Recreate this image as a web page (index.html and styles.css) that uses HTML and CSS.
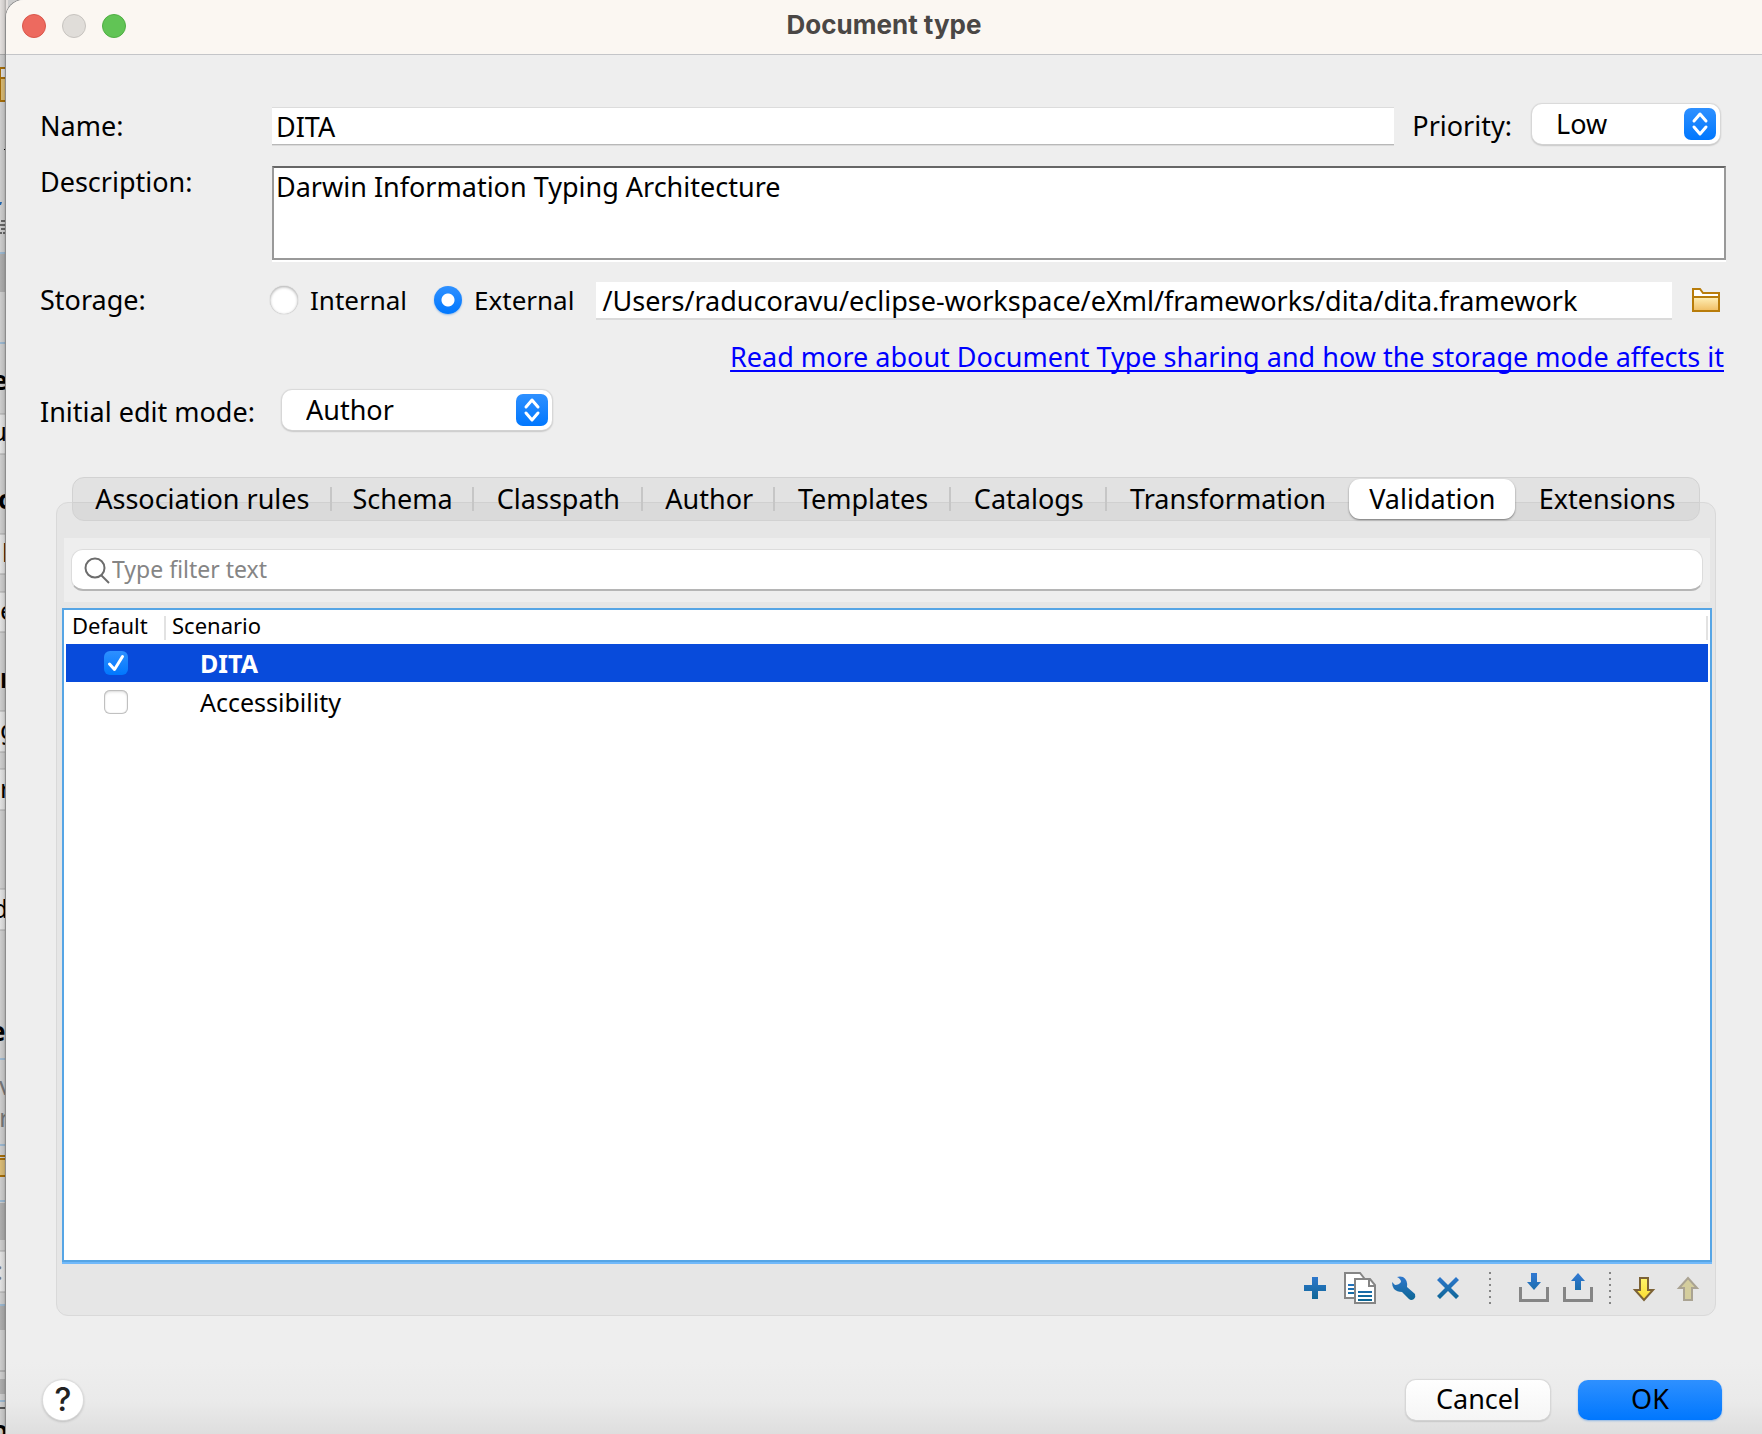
FILE: index.html
```html
<!DOCTYPE html>
<html lang="en">
<head>
<meta charset="utf-8">
<title>Document type</title>
<link rel="stylesheet" href="styles.css">
</head>
<body>
<div class="desktop">
  <svg class="behind" width="8" height="1434" aria-hidden="true">
    <defs>
      <linearGradient id="shade"><stop offset="0" stop-color="#000" stop-opacity="0"/><stop offset="0.6" stop-color="#000" stop-opacity=".08"/><stop offset="1" stop-color="#000" stop-opacity=".24"/></linearGradient>
    </defs>
    <rect width="8" height="1434" fill="#cdcdcd"/>
    <rect width="8" height="54" fill="#e4e0de"/>
    <rect y="54" width="8" height="1" fill="#aaa"/>
    <rect y="67" width="8" height="35" fill="#a46c08"/><rect x="1" y="69" width="8" height="8" fill="#ddd"/><rect x="1" y="79" width="8" height="21" fill="#d9bb76"/>
    <path d="M4 149h4v1h-1v2h-1v-2h-2z" fill="#000"/>
    <path d="M0 202h2l-1 3h-1z" fill="#1f66b0"/>
    <path d="M1 221h7M0 225h8M1 229h7M0 233h2M3 233h5" stroke="#666" stroke-width="2"/>
    <g fill="#9cb8d0"><rect y="252" width="8" height="2"/><rect y="342" width="8" height="2"/><rect y="1058" width="8" height="2"/><rect y="1144" width="8" height="2"/><rect y="1200" width="8" height="2"/><rect y="1304" width="8" height="2"/><rect y="1400" width="8" height="2"/></g>
    <g fill="#adadad"><rect y="254" width="8" height="38"/><rect y="1203" width="8" height="37"/><rect y="1306" width="8" height="24"/><rect y="1379" width="8" height="15"/></g>
    <g fill="#e2e2e2" stroke="#a8a8a8"><rect x="-2" y="414" width="12" height="40"/><rect x="-2" y="534" width="12" height="40"/><rect x="-2" y="592" width="12" height="40"/><rect x="-2" y="711" width="12" height="41"/><rect x="-2" y="769" width="12" height="41"/><rect x="-2" y="889" width="12" height="41"/><rect x="-2" y="1251" width="12" height="41"/></g>
    <path d="M0 1371h8" stroke="#b0b0b0" stroke-width="2"/><path d="M0 1408h8" stroke="#555" stroke-width="2"/>
    <path d="M0 1156H8M0 1159H8M0 1176H8" stroke="#a46c08" stroke-width="2"/><rect y="1160" width="8" height="15" fill="#d9bb76"/>
    <g class="behind-text">
      <text class="strong" x="-8" y="390">e</text><text x="-9" y="441">u</text><text class="strong" x="-2" y="509">c</text><text x="2" y="562">l</text><text x="0" y="620">e</text><text class="strong" x="0" y="688">r</text><text x="0" y="739">g</text><text x="0" y="798">r</text><text x="-8" y="918">d</text><text class="strong" x="-10" y="1041">es</text><text class="dim" x="-1" y="1095">v</text><text class="dim" x="-1" y="1127">r</text><text class="dim" x="-4" y="1280">:</text><text class="strong" x="-8" y="1440">o</text>
    </g>
    <rect width="6" height="1434" fill="url(#shade)"/>
  </svg>

  <main class="window">
    <header class="titlebar">
      <div class="lights"><button class="light close" aria-label="Close"></button><button class="light minimize" aria-label="Minimize" disabled></button><button class="light zoom" aria-label="Zoom"></button></div>
      <h1>Document type</h1>
    </header>

    <form class="form">
      <div class="row name-row">
        <label class="caption" for="name">Name:</label>
        <input class="field name" id="name" type="text" value="DITA">
        <label class="priority-label" for="priority">Priority:</label>
        <span class="combo priority">
          <select id="priority"><option>Low</option></select>
          <svg width="32" height="32" viewBox="0 0 32 32"><path d="M10 13l6-7 6 7M10 19l6 7 6-7"/></svg>
        </span>
      </div>
      <div class="row description-row">
        <label class="caption" for="description">Description:</label>
        <textarea id="description">Darwin Information Typing Architecture</textarea>
      </div>
      <div class="row storage-row">
        <span class="caption">Storage:</span>
        <label class="choice"><input type="radio" name="storage">Internal</label>
        <label class="choice"><input type="radio" name="storage" checked>External</label>
        <input class="field path" type="text" aria-label="External storage path" value="/Users/raducoravu/eclipse-workspace/eXml/frameworks/dita/dita.framework">
        <button class="browse" type="button" aria-label="Browse">
          <svg width="28" height="24" viewBox="0 0 28 24"><defs><linearGradient id="gold" x2="0" y2="1"><stop stop-color="#fff0b8"/><stop offset="1" stop-color="#f0bd62"/></linearGradient></defs><path d="M1 23V1h7l3 4h16v18z" fill="#fff" stroke="#b87c0a" stroke-width="2"/><path d="M1 9h26v14H1z" fill="url(#gold)" stroke="#b87c0a" stroke-width="2"/></svg>
        </button>
      </div>
      <div class="link-row"><a href="#storage">Read more about Document Type sharing and how the storage mode affects it</a></div>
      <div class="row mode-row">
        <label class="caption" for="mode">Initial edit mode:</label>
        <span class="combo mode">
          <select id="mode"><option>Author</option></select>
          <svg width="32" height="32" viewBox="0 0 32 32"><path d="M10 13l6-7 6 7M10 19l6 7 6-7"/></svg>
        </span>
      </div>
    </form>

    <section class="tabbed">
      <nav class="tabs" role="tablist">
        <button role="tab">Association rules</button><button role="tab">Schema</button><button role="tab">Classpath</button><button role="tab">Author</button><button role="tab">Templates</button><button role="tab">Catalogs</button><button role="tab">Transformation</button><button role="tab" aria-selected="true">Validation</button><button role="tab">Extensions</button>
      </nav>
      <div class="panel">
        <div class="filter">
          <label class="search">
            <svg width="26" height="28" viewBox="0 0 26 28"><circle cx="11" cy="12" r="9.500"/><path d="M17 19l8 8"/></svg>
            <input type="text" placeholder="Type filter text" aria-label="Type filter text">
          </label>
        </div>
        <div class="list">
          <table>
            <thead><tr><th class="default">Default</th><th class="scenario">Scenario</th></tr></thead>
            <tbody>
              <tr class="selected"><td><label class="check"><input type="checkbox" checked aria-label="DITA default"><svg width="24" height="24" viewBox="0 0 24 24"><path d="M5.500 13l5 5.500 8-13"/></svg></label></td><td>DITA</td></tr>
              <tr><td><label class="check"><input type="checkbox" aria-label="Accessibility default"></label></td><td>Accessibility</td></tr>
            </tbody>
          </table>
        </div>
        <div class="toolbar">
          <svg class="defs" width="0" height="0"><defs><linearGradient id="blue" gradientUnits="userSpaceOnUse" x1="0" y1="4" x2="0" y2="28"><stop stop-color="#2f78cf"/><stop offset="1" stop-color="#0d6694"/></linearGradient><linearGradient id="yellow" x2="0" y2="1"><stop stop-color="#fff56a"/><stop offset="1" stop-color="#fbdc30"/></linearGradient></defs></svg>
          <button aria-label="New"><svg viewBox="0 0 32 32"><path d="M12 5h6v8h8v6h-8v8h-6v-8H4v-6h8z" fill="url(#blue)"/></svg></button>
          <button aria-label="Duplicate"><svg viewBox="0 0 32 32"><path d="M1 1h15l4 5v20H1z" fill="#fff" stroke="#858585" stroke-width="2"/><path d="M4 12h8v2H4zM4 16h8v2H4zM4 20h8v2H4z" fill="url(#blue)"/><path d="M11 7h15l5 6v18H11z" fill="#fff" stroke="#858585" stroke-width="2"/><path d="M25 7v7h6" fill="none" stroke="#858585" stroke-width="2"/><path d="M14 19h14v2H14zM14 23h14v2H14zM14 27h14v2H14z" fill="url(#blue)"/></svg></button>
          <button aria-label="Edit"><svg viewBox="0 0 32 32"><path d="M9 5Q12 4 15 5Q20 8 19 15L27 22Q28 25 26 27Q23 29 21 27L14 20Q9 20 6 17Q4 14 4 10L7 13Q11 13 13 10Q13 7 9 5z" fill="url(#blue)"/></svg></button>
          <button aria-label="Delete"><svg viewBox="0 0 32 32"><path d="M5 8l3-3 8 8 8-8 3 3-8 8 8 8-3 3-8-8-8 8-3-3 8-8z" fill="url(#blue)"/></svg></button>
          <span class="dots"></span>
          <button aria-label="Import"><svg viewBox="0 0 32 32"><path d="M1.500 15v13.500h27V15" fill="none" stroke="#858585" stroke-width="3"/><path d="M12 1h6v9h4l-7 8-7-8h4z" fill="url(#blue)"/></svg></button>
          <button aria-label="Export"><svg viewBox="0 0 32 32"><path d="M1.500 15v13.500h27V15" fill="none" stroke="#858585" stroke-width="3"/><path d="M12 18h6V9h4l-7-8-7 8h4z" fill="url(#blue)"/></svg></button>
          <span class="dots"></span>
          <button aria-label="Move down"><svg viewBox="0 0 32 32"><path d="M12 6h8v12h5l-9 10-9-10h5z" fill="url(#yellow)" stroke="#7c6236" stroke-width="2"/></svg></button>
          <button aria-label="Move up" disabled><svg viewBox="0 0 32 32"><path d="M12 28h8V16h5L16 6 7 16h5z" fill="#d4cd9d" stroke="#aaa392" stroke-width="2"/></svg></button>
        </div>
      </div>
    </section>

    <footer class="actions">
      <button class="help" aria-label="Help">?</button>
      <button class="push">Cancel</button>
      <button class="push primary">OK</button>
    </footer>
  </main>
</div>
</body>
</html>
```
FILE: styles.css
```css
* { box-sizing: border-box; }

body {
  margin: 0;
  background: #cdcdcd;
  color: #000;
  font: 27px/32px "Noto Sans", "Open Sans", sans-serif;
}

button, input, select, textarea { font: inherit; color: inherit; margin: 0; border: 0; padding: 0; }
button { background: none; }

.desktop { position: relative; overflow: hidden; min-height: 100vh; padding-left: 6px; display: flex; }

/* sliver of the window underneath */
.behind { position: absolute; left: 0; top: 0; }
.behind-text { font-size: 26px; }
.behind-text .strong { font-weight: 700; }
.behind-text .dim { fill: #777; }

.window {
  position: relative;
  flex: 1;
  display: flex;
  flex-direction: column;
  overflow: hidden;
  border-top-left-radius: 18px;
  background: linear-gradient(to top, #dedede, #eaeaea 32px, #eee 72px);
  box-shadow: 0 0 0 1px #8c8c8c;
}

.titlebar {
  display: grid;
  grid-template-columns: 1fr auto 1fr;
  align-items: center;
  height: 55px;
  padding: 0 16px;
  background: #fbf7f2;
  border-bottom: 1px solid #c4c5c8;
}
.titlebar h1 { margin: 0; padding-bottom: 4px; font: 700 26px/32px Inter, sans-serif; color: #4a4745; }
.lights { display: flex; gap: 16px; padding-bottom: 2px; }
.light { width: 24px; height: 24px; border-radius: 50%; border: 1px solid; }
.close { background: #ed6a5f; border-color: #d9564b; }
.minimize { background: #e0ddd9; border-color: #c6c3bf; }
.zoom { background: #61c455; border-color: #4fae43; }

.form { padding: 48px 36px 0 34px; }
.row { display: flex; align-items: center; }
.caption { width: 232px; flex: none; }
.name-row { height: 42px; }
.name-row .caption, .priority-label, .mode-row .caption { padding-top: 4px; }
.field { height: 36px; min-width: 0; padding: 0 4px; background: #fff; box-shadow: 0 1px 0 #b8b8b8, 0 2px 0 #dadada, 0 -1px 0 #dcdcdc; }
.name { flex: 1; margin-top: 4px; }
.priority-label { margin: 0 20px 0 18px; }

.combo { position: relative; display: block; height: 40px; }
.combo select {
  appearance: none;
  width: 100%;
  height: 40px;
  padding: 0 24px;
  border-radius: 10px;
  background: #fff;
  box-shadow: 0 0 1px 1px #d9d9d9, 0 1px 2px #777;
}
.combo svg { position: absolute; right: 4px; top: 4px; border-radius: 7px; background: linear-gradient(#2e90ff, #0077fe); pointer-events: none; }
.combo path { fill: none; stroke: #fff; stroke-width: 3; stroke-linecap: round; stroke-linejoin: round; }
.priority { width: 188px; margin-right: 6px; }
.mode { width: 270px; margin-left: 10px; }

.description-row { align-items: flex-start; padding-top: 21px; }
.description-row textarea {
  flex: 1;
  height: 94px;
  padding: 3px 2px;
  resize: none;
  border: 2px solid #999;
  border-top-color: #666;
  background: #fff;
  box-shadow: 0 2px 0 #fff;
}

.storage-row { padding-top: 22px; }
.storage-row .caption { width: 230px; }
.choice { display: flex; align-items: center; gap: 12px; margin-right: 27px; font-size: 26px; }
.choice + .choice { margin-right: 22px; }
.choice input {
  appearance: none;
  width: 28px;
  height: 28px;
  border-radius: 50%;
  background: #fff;
  box-shadow: inset 0 1px 3px #aaa, 0 0 1px #999;
}
.choice input:checked { background: radial-gradient(circle, #fff 6px, transparent 7px), linear-gradient(#2e90ff, #0077fe); box-shadow: 0 1px 2px #9bbde4; }
.path { flex: 1; padding: 0 6px; box-shadow: 0 2px 0 #dadada; }
.browse { display: block; width: 28px; height: 24px; margin: 0 6px 0 20px; }
.browse svg { display: block; }

.link-row { padding: 23px 2px 0 0; text-align: right; }
a { color: #00f; text-decoration: underline; text-decoration-thickness: 2px; text-underline-offset: 3px; text-decoration-skip-ink: none; }
.mode-row { padding-top: 17px; }

.tabbed { flex: 1; display: flex; flex-direction: column; padding: 47px 46px 0 50px; }
.tabs {
  position: relative;
  z-index: 1;
  display: grid;
  grid-template-columns: 259fr 142fr 170fr 132fr 176fr 156fr 243fr 166fr 184fr;
  height: 44px;
  margin: 0 16px -19px;
  border: 1px solid #d2d2d2;
  border-radius: 12px;
  background: linear-gradient(#e2e2e2 24px, #d0d0d0 24px, #d0d0d0 25px, #dadada 25px);
}
.tabs button { min-width: 0; padding: 0 0 1px; white-space: nowrap; }
.tabs button:nth-child(-n+6) { background: linear-gradient(#c6c6c6, #c6c6c6) right 9px / 2px 24px no-repeat; }
.tabs [aria-selected] { height: 40px; margin-top: 1px; border-radius: 11px; background: #fff; box-shadow: 0 1px 2px #777; }

.panel {
  flex: 1;
  display: flex;
  flex-direction: column;
  padding: 35px 3px 0 5px;
  border: 1px solid #d9d9d9;
  border-radius: 12px;
  background: #e6e6e6;
}
.filter { margin: 0 2px 6px; padding: 11px 7px; background: #eee; }
.search {
  display: flex;
  align-items: center;
  height: 42px;
  padding: 0 12px;
  border: 1px solid #dcdcdc;
  border-bottom: 2px solid #b5b5b5;
  border-radius: 12px;
  background: #fff;
}
.search svg { flex: none; fill: none; stroke: #6c6c6c; stroke-width: 2; }
.search input { flex: 1; padding: 0 0 1px 2px; font-size: 23px; background: none; }
.search input::placeholder { color: #858585; opacity: 1; }

.list { flex: 1; padding: 0 2px; border: 2px solid #56a5e5; background: #fff; box-shadow: 0 2px 0 #71b9fa; }
table { width: 100%; border-collapse: collapse; table-layout: fixed; font-size: 25px; }
th { height: 34px; padding: 0 6px 4px; text-align: left; font-size: 22px; font-weight: 400; line-height: 30px; background: linear-gradient(#e2e2e2, #e2e2e2) right 6px / 2px 24px no-repeat; }
.default { width: 100px; }
td { height: 40px; padding: 0 34px; }
td:first-child { padding: 0 38px; }
.selected td { height: 38px; }
.selected { background: #084bdb; color: #fff; font-weight: 700; }
.check { display: grid; width: 24px; height: 24px; }
.check > * { grid-area: 1 / 1; }
.check input { appearance: none; width: 24px; height: 24px; border-radius: 6px; background: #fff; box-shadow: inset 0 0 1px 1px #bbb, inset 0 2px 3px #ddd; }
.check input:checked { background: linear-gradient(#2e90ff, #0077fe); box-shadow: none; }
.check path { fill: none; stroke: #fff; stroke-width: 3; stroke-linecap: round; stroke-linejoin: round; }

.toolbar { display: flex; align-items: center; justify-content: flex-end; gap: 12px; height: 53px; padding: 2px 8px 3px 0; }
.toolbar button, .toolbar button svg { display: block; width: 32px; height: 32px; }
.defs { position: absolute; }
.dots { width: 2px; height: 32px; margin: 0 16px 0 13px; background: repeating-linear-gradient(#858585 0 2px, transparent 2px 6px); }
.dots ~ .dots { margin: 0 5px 0 2px; }

.actions { display: flex; align-items: center; gap: 28px; height: 118px; padding: 50px 40px 0 37px; }
.push { width: 144px; height: 40px; padding-bottom: 2px; border-radius: 10px; background: linear-gradient(#fff, #f5f5f5); box-shadow: 0 0 1px 1px #d8d8d8, 0 1px 2px #888; }
.primary { background: linear-gradient(#2e90ff, #0077fe); box-shadow: 0 1px 2px #8fb6e4; }
.help { width: 40px; height: 40px; margin-right: auto; border-radius: 50%; background: #fff; box-shadow: 0 0 1px 1px #ddd, 0 1px 3px #999; font: 500 32px/38px Inter, sans-serif; color: #222; }
```
